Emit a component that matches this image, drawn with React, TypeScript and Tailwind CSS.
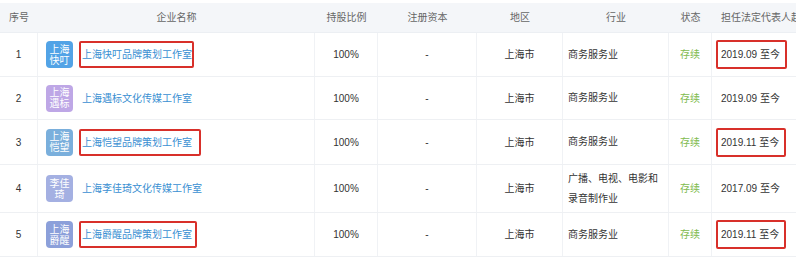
import React from "react";

type Row = {
  no: string;
  badge: [string, string];
  badgeColor: string;
  name: string;
  boxed: boolean;
  boxPr: number;
  industry: React.ReactNode;
  date: string;
  dateBoxed: boolean;
  h: number;
};

const rows: Row[] = [
  { no: "1", badge: ["上海", "快叮"], badgeColor: "bg-[#52a3e6]", name: "上海快叮品牌策划工作室", boxed: true, boxPr: 0, industry: "商务服务业", date: "2019.09 至今", dateBoxed: true, h: 44 },
  { no: "2", badge: ["上海", "遇标"], badgeColor: "bg-[#bea7e6]", name: "上海遇标文化传媒工作室", boxed: false, boxPr: 0, industry: "商务服务业", date: "2019.09 至今", dateBoxed: false, h: 43 },
  { no: "3", badge: ["上海", "恺望"], badgeColor: "bg-[#7aafdc]", name: "上海恺望品牌策划工作室", boxed: true, boxPr: 7, industry: "商务服务业", date: "2019.11 至今", dateBoxed: true, h: 45 },
  { no: "4", badge: ["李佳", "琦"], badgeColor: "bg-[#a4b0e2]", name: "上海李佳琦文化传媒工作室", boxed: false, boxPr: 0, industry: (<>广播、电视、电影和<br />录音制作业</>), date: "2017.09 至今", dateBoxed: false, h: 48 },
  { no: "5", badge: ["上海", "爵醒"], badgeColor: "bg-[#8ca0da]", name: "上海爵醒品牌策划工作室", boxed: true, boxPr: 3, industry: "商务服务业", date: "2019.11 至今", dateBoxed: true, h: 44 },
];

export default function App() {
  const font = { fontFamily: '"Liberation Sans","Noto Sans CJK SC",sans-serif' };
  return (
    <div className="w-[796px] h-[261px] bg-white overflow-hidden text-[10px] text-[#333]" style={font}>
      <div className="h-[3px]" />
      <div className="flex h-[30px] bg-[#f4f6f9] text-[#666] border-b border-[#eceff3]">
        <div className="w-[38px] flex items-center justify-center">序号</div>
        <div className="w-[277px] flex items-center justify-center">企业名称</div>
        <div className="w-[63px] flex items-center justify-center">持股比例</div>
        <div className="w-[99px] flex items-center justify-center">注册资本</div>
        <div className="w-[86px] flex items-center justify-center">地区</div>
        <div className="w-[106px] flex items-center justify-center">行业</div>
        <div className="w-[43px] flex items-center justify-center">状态</div>
        <div className="w-[84px] flex items-center pl-[9px] whitespace-nowrap overflow-hidden">担任法定代表人起</div>
      </div>
      {rows.map((r) => (
        <div key={r.no} className="flex border-b border-[#eef0f3]" style={{ height: r.h }}>
          <div className="w-[38px] flex items-center justify-center border-r border-[#f0f2f5]">{r.no}</div>
          <div className="w-[277px] flex items-center pl-[8px] border-r border-[#f0f2f5]">
            <div className={`w-[27px] h-[27px] rounded-[4px] ${r.badgeColor} text-white text-[10px] leading-[11px] flex flex-col items-center justify-center`}>
              <span>{r.badge[0]}</span>
              <span>{r.badge[1]}</span>
            </div>
            <div
              className={`ml-[6px] h-[27px] flex items-center pl-[1px] rounded-[2px] border-2 ${r.boxed ? "border-[#d8302a]" : "border-transparent"} text-[#3a8fd2]`}
              style={{ paddingRight: r.boxPr }}
            >
              {r.name}
            </div>
          </div>
          <div className="w-[63px] flex items-center justify-center border-r border-[#f0f2f5]">100%</div>
          <div className="w-[99px] flex items-center justify-center border-r border-[#f0f2f5]">-</div>
          <div className="w-[86px] flex items-center justify-center border-r border-[#f0f2f5]">上海市</div>
          <div className="w-[106px] flex items-center pl-[5px] leading-[20px] border-r border-[#f0f2f5]">{r.industry}</div>
          <div className="w-[43px] flex items-center justify-center text-[#7fbb4f] border-r border-[#f0f2f5]">存续</div>
          <div className="w-[84px] flex items-center pl-[4px]">
            <div className={`h-[29px] flex items-center pl-[3px] pr-[5px] rounded-[2px] border-2 whitespace-nowrap ${r.dateBoxed ? "border-[#d8302a]" : "border-transparent"}`}>
              {r.date}
            </div>
          </div>
        </div>
      ))}
    </div>
  );
}
